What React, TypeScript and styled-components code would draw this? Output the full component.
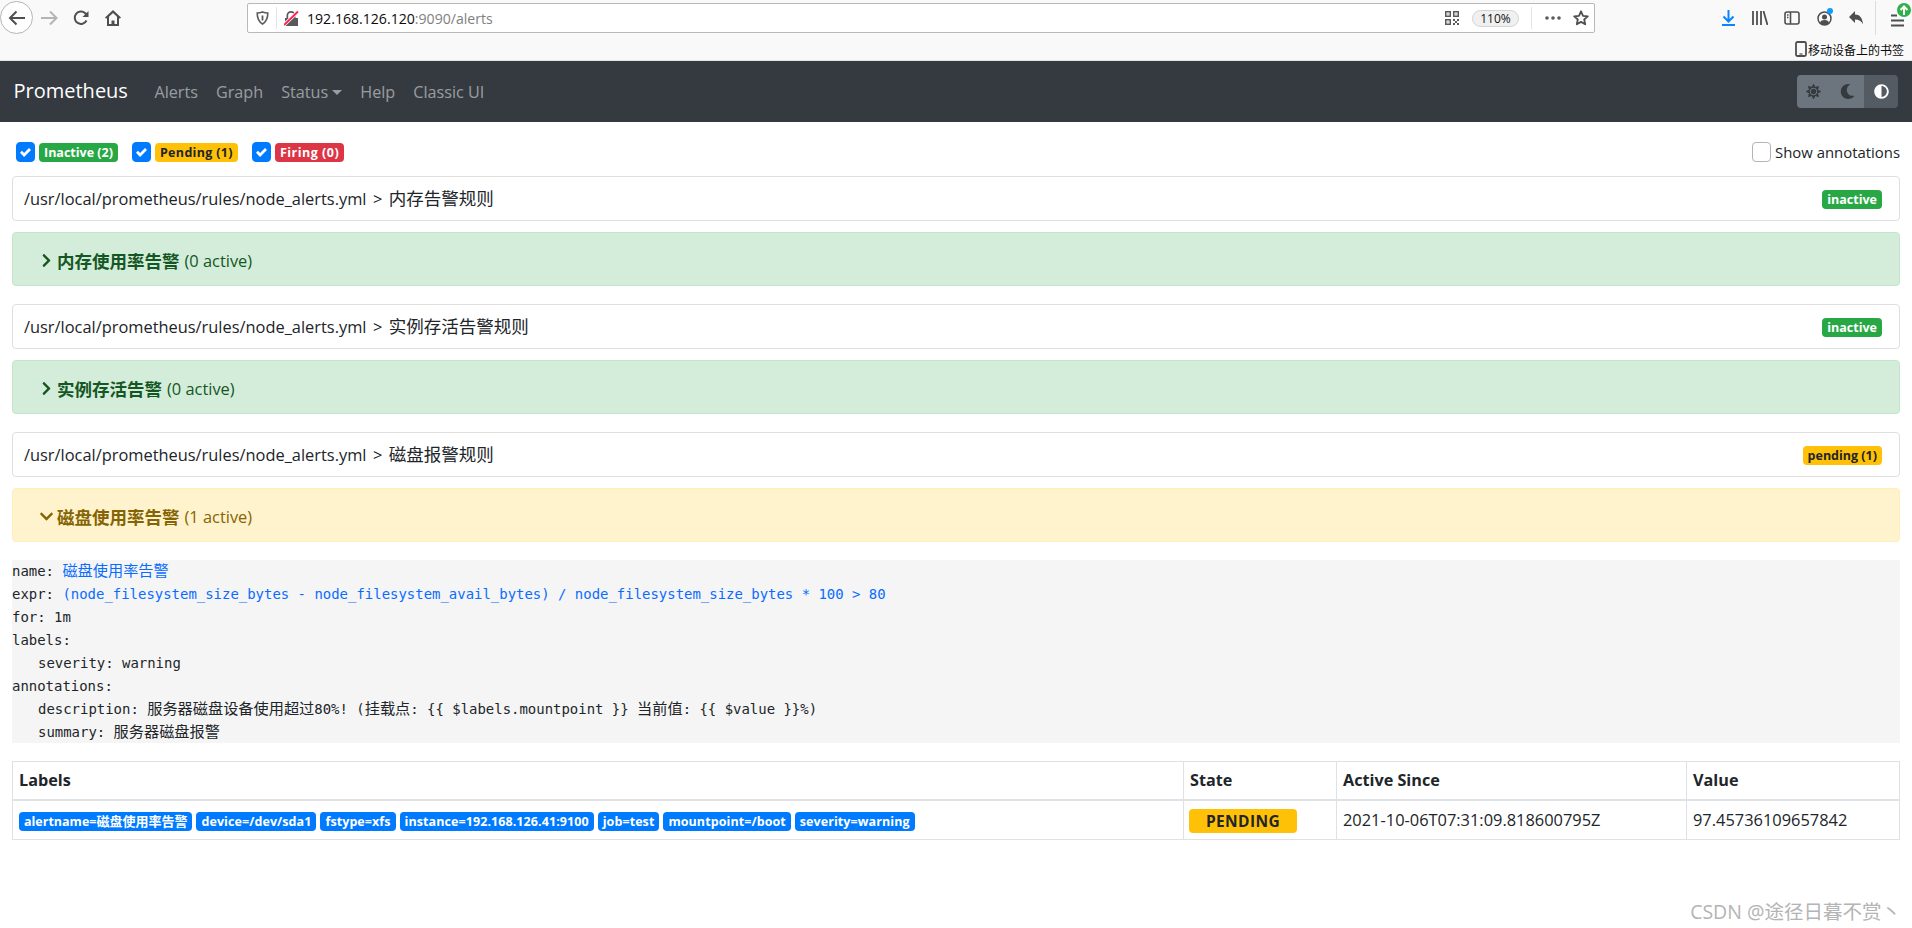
import React from "react";
import styled, { createGlobalStyle } from "styled-components";
import { FaSun, FaMoon, FaAdjust, FaChevronRight, FaChevronDown } from "react-icons/fa";

const SANS = `"Open Sans", "Noto Sans CJK SC", sans-serif`;
const MONO = `"DejaVu Sans Mono", "Noto Sans CJK SC", monospace`;

const Global = createGlobalStyle`
  html, body { margin: 0; padding: 0; background: #fff; }
  body { font-family: ${SANS}; color: #212529; font-size: 16px; overflow: hidden; }
  * { box-sizing: border-box; }
`;

const Page = styled.div`
  position: relative;
  width: 1912px;
  height: 928px;
  overflow: hidden;
`;

const Chrome = styled.header`
  height: 61px;
  background: #f9f9fa;
  border-bottom: 1px solid #e2e2e2;
`;
const Toolbar = styled.div`
  display: flex;
  align-items: flex-start;
  height: 38px;
  color: #4f4f52;
`;
const BackButton = styled.div`
  width: 33px;
  height: 33px;
  margin-top: 1px;
  border: 1px solid #b5b5b5;
  border-radius: 50%;
  background: #fff;
  display: flex;
  align-items: center;
  justify-content: center;
`;
const Slot = styled.div<{ $w?: number; $faded?: boolean; $blue?: boolean }>`
  position: relative;
  width: ${(p) => p.$w ?? 32}px;
  height: 36px;
  display: flex;
  align-items: center;
  justify-content: center;
  color: ${(p) => (p.$faded ? "#b4b4b6" : p.$blue ? "#0a84ff" : "#4f4f52")};
`;
const UrlBar = styled.div`
  width: 1348px;
  height: 30px;
  margin: 3px 0 0 118px;
  background: #fff;
  border: 1px solid #b9b9b9;
  border-radius: 2px;
  display: flex;
  align-items: center;
  padding: 0 5px 0 8px;
`;
const UrlDivider = styled.span<{ $m: string }>`
  width: 1px;
  height: 22px;
  background: #e4e4e4;
  margin: ${(p) => p.$m};
`;
const UrlText = styled.div`
  margin-left: 8px;
  flex: 1;
  font-size: 14.1px;
  color: #808080;
  white-space: nowrap;
`;
const UrlHost = styled.span`
  color: #0c0c0d;
`;
const ZoomPill = styled.div`
  width: 47px;
  height: 17px;
  margin-left: 13px;
  border: 1px solid #d4d4d4;
  border-radius: 9px;
  background: #f0f0f1;
  font-size: 12px;
  line-height: 15px;
  text-align: center;
  color: #111;
`;
const UrlIcon = styled.div<{ $m?: string }>`
  display: flex;
  margin: ${(p) => p.$m ?? "0"};
  color: #5b5b5e;
`;
const RightTools = styled.div`
  display: flex;
  margin-left: 117px;
`;
const ToolSep = styled.span`
  width: 1px;
  height: 34px;
  margin: 1px 0 0 3px;
  background: #dcdcdc;
`;
const UpdateBadge = styled.span`
  position: absolute;
  top: 3px;
  right: 1px;
  width: 14px;
  height: 14px;
  border-radius: 50%;
  background: #30b04a;
  display: flex;
  align-items: center;
  justify-content: center;
`;
const BlueDot = styled.span`
  position: absolute;
  top: 8px;
  right: 7px;
  width: 6px;
  height: 6px;
  border-radius: 50%;
  background: #0a9dff;
`;
const BookmarkBar = styled.div`
  display: flex;
  justify-content: flex-end;
  align-items: center;
  height: 22px;
  padding-right: 8px;
  gap: 1px;
  font-size: 12px;
  color: #0c0c0d;
  font-family: "Noto Sans CJK SC", sans-serif;
`;

const Navbar = styled.nav`
  height: 61px;
  background: #343a40;
  display: flex;
  align-items: center;
  padding: 0 14px 0 13.5px;
`;
const Brand = styled.div`
  font-size: 20px;
  color: #fff;
  margin-right: 26.5px;
  margin-top: -2px;
`;
const NavLinks = styled.div`
  display: flex;
  gap: 18px;
  flex: 1;
  margin-top: 1px;
`;
const NavLink = styled.span`
  font-size: 16.2px;
  color: rgba(255, 255, 255, 0.5);
  display: inline-flex;
  align-items: center;
`;
const Caret = styled.i`
  display: inline-block;
  margin-left: 4px;
  border-top: 5px solid;
  border-left: 5px solid transparent;
  border-right: 5px solid transparent;
`;
const ThemeGroup = styled.div`
  display: flex;
  border-radius: 4px;
  overflow: hidden;
`;
const ThemeBtn = styled.div<{ $active?: boolean }>`
  width: 33.7px;
  height: 33px;
  display: flex;
  align-items: center;
  justify-content: center;
  font-size: 15px;
  background: ${(p) => (p.$active ? "#545b62" : "#6c757d")};
  color: ${(p) => (p.$active ? "#fff" : "#343a40")};
`;

const Main = styled.main`
  padding: 0 12px;
`;
const FilterRow = styled.div`
  height: 54px;
  display: flex;
  align-items: center;
  justify-content: space-between;
  padding: 6px 0 0 4px;
`;
const Filters = styled.div`
  display: flex;
  gap: 14px;
`;
const Filter = styled.label`
  display: flex;
  align-items: center;
  gap: 4px;
`;
const CheckBox = styled.span<{ $on?: boolean }>`
  width: 19px;
  height: 20px;
  border-radius: 4px;
  display: flex;
  align-items: center;
  justify-content: center;
  background: ${(p) => (p.$on ? "#007bff" : "#fff")};
  border: 1px solid ${(p) => (p.$on ? "#007bff" : "#adb5bd")};
`;
const BADGE = { green: "#28a745", yellow: "#ffc107", red: "#dc3545", blue: "#007bff" };
type BadgeColor = keyof typeof BADGE;
const Badge = styled.span<{ $c: BadgeColor; $track?: number }>`
  display: inline-block;
  height: 19px;
  line-height: 19px;
  padding: 0 5px;
  border-radius: 4px;
  font-size: 12.5px;
  font-weight: 700;
  white-space: nowrap;
  letter-spacing: ${(p) => p.$track ?? 0}px;
  background: ${(p) => BADGE[p.$c]};
  color: ${(p) => (p.$c === "yellow" ? "#212529" : "#fff")};
`;
const CardBadge = styled(Badge)`
  margin-top: 3px;
  word-spacing: 0;
`;
const Cjk = styled.span<{ $s: number }>`
  font-size: ${(p) => p.$s}px;
`;
const ShowAnno = styled.label`
  display: flex;
  align-items: center;
  gap: 4px;
  font-size: 14.9px;
`;
const Card = styled.section`
  height: 45px;
  margin-bottom: 11px;
  border: 1px solid #dfdfdf;
  border-radius: 4px;
  display: flex;
  align-items: center;
  justify-content: space-between;
  padding: 0 17px 2px 11px;
  font-size: 16.4px;
  word-spacing: 2.2px;
  white-space: nowrap;
`;
const Alert = styled.section<{ $tone: "ok" | "warn" }>`
  height: 54px;
  margin-bottom: 18px;
  border-radius: 4px;
  border: 1px solid ${(p) => (p.$tone === "ok" ? "#c3e6cb" : "#ffeeba")};
  background: ${(p) => (p.$tone === "ok" ? "#d4edda" : "#fff3cd")};
  color: ${(p) => (p.$tone === "ok" ? "#155724" : "#856404")};
  display: flex;
  align-items: center;
  padding: 2px 0 0 26px;
  font-size: 16.4px;
`;
const AlertIcon = styled.span`
  display: flex;
  justify-content: center;
  width: 15px;
  margin-right: 3px;
  font-size: 15px;
`;
const AlertName = styled.strong`
  font-weight: 700;
  margin-right: 5px;
  font-size: 17.5px;
`;
const Pre = styled.pre`
  margin: 0 0 18px;
  height: 183px;
  background: #f5f5f5;
  font-family: ${MONO};
  font-size: 13.96px;
  line-height: 23px;
  color: #212529;
  overflow: hidden;
`;
const Value = styled.span`
  color: #0a6cff;
`;
const Indent = styled.span`
  padding-left: 26px;
`;
const Table = styled.table`
  width: 1887px;
  table-layout: fixed;
  border-collapse: collapse;
  font-size: 16.4px;
  border: 1px solid #dee2e6;
`;
const Th = styled.th<{ $w: number }>`
  width: ${(p) => p.$w}px;
  height: 38px;
  padding: 0 6px;
  text-align: left;
  font-weight: 700;
  font-size: 16.2px;
  border: 1px solid #dee2e6;
  border-bottom: 2px solid #dee2e6;
`;
const Td = styled.td`
  height: 40px;
  padding: 0 6px;
  border: 1px solid #dee2e6;
  white-space: nowrap;
`;
const LabelList = styled.div`
  display: flex;
  gap: 4px;
  margin-top: 3px;
`;
const StateBadge = styled.span`
  display: block;
  width: 108px;
  height: 24px;
  line-height: 24px;
  margin: 2px 0 0 -1px;
  text-align: center;
  border-radius: 4px;
  background: #ffc107;
  font-size: 15.5px;
  font-weight: 700;
  letter-spacing: 0.4px;
  color: #212529;
`;
const Watermark = styled.div`
  position: absolute;
  right: 11px;
  top: 896px;
  font-size: 19.5px;
  color: #b4b4b4;
  white-space: nowrap;
`;

const Check = () => (
  <svg width="11" height="11" viewBox="0 0 8 8">
    <path fill="#fff" d="M6.564.75l-3.59 3.612-1.538-1.55L0 4.26 2.974 7.25 8 2.193z" />
  </svg>
);

const rules = [
  { group: "内存告警规则", name: "内存使用率告警", badge: "inactive", active: 0 },
  { group: "实例存活告警规则", name: "实例存活告警", badge: "inactive", active: 0 },
  { group: "磁盘报警规则", name: "磁盘使用率告警", badge: "pending (1)", active: 1 },
];
const labels = [
  "device=/dev/sda1",
  "fstype=xfs",
  "instance=192.168.126.41:9100",
  "job=test",
  "mountpoint=/boot",
  "severity=warning",
];

export default function App() {
  return (
    <Page>
      <Global />
      <Chrome>
        <Toolbar>
          <BackButton>
            <svg width="18" height="16" viewBox="0 0 18 16" fill="none" stroke="#4f4f52" strokeWidth="2">
              <path d="M17 8H2M8.5 1.5 2 8l6.500 6.500" />
            </svg>
          </BackButton>
          <Slot $faded>
            <svg width="17" height="16" viewBox="0 0 17 16" fill="none" stroke="currentColor" strokeWidth="2">
              <path d="M0 8h15M9 1.500 15.500 8 9 14.500" />
            </svg>
          </Slot>
          <Slot>
            <svg width="16" height="16" viewBox="0 0 16 16" fill="none">
              <path d="M13.500 10.500A6.200 6.200 0 1 1 12.200 3.200L14 5" stroke="currentColor" strokeWidth="2" />
              <path d="M15.500 1v6h-6z" fill="currentColor" />
            </svg>
          </Slot>
          <Slot>
            <svg width="16" height="16" viewBox="0 0 16 16" fill="currentColor">
              <path fillRule="evenodd" d="M8 0 0 7.500 1.200 8.800 2 8v8h12V8l.8.8L16 7.500zM4 6.800l4-3.700 4 3.700V14h-2.500v-3.500h-3V14H4z" />
            </svg>
          </Slot>
          <UrlBar>
            <UrlIcon>
              <svg width="13" height="14" viewBox="0 0 13 14" fill="none">
                <path d="M1.200 2c2 0 3.600-.4 5.300-1.100C8.200 1.600 9.800 2 11.800 2c0 5.200-1.700 8.900-5.300 11C2.900 10.900 1.200 7.200 1.200 2z" stroke="currentColor" strokeWidth="1.600" />
                <path d="M6.500 4.500v5" stroke="currentColor" strokeWidth="1.800" />
              </svg>
            </UrlIcon>
            <UrlDivider $m="0 7px 0 7px" />
            <UrlIcon>
              <svg width="15" height="16" viewBox="0 0 15 16">
                <path d="M1 8h1.500V5.500a4.500 4.500 0 0 1 9 0V8H14v8H1zm3.200 0h5.600V5.500a2.800 2.800 0 0 0-5.600 0z" fill="#59595c" fillRule="evenodd" />
                <path d="M0 15 14 1.500" stroke="#f9f9fa" strokeWidth="3.500" />
                <path d="M0 15 14 1.500" stroke="#ff1f4f" strokeWidth="1.800" />
              </svg>
            </UrlIcon>
            <UrlText>
              <UrlHost>192.168.126.120</UrlHost>:9090/alerts
            </UrlText>
            <UrlIcon>
              <svg width="14" height="14" viewBox="0 0 14 14" fill="currentColor">
                <path fillRule="evenodd" d="M0 0h6v6H0zm1.500 1.500v3h3v-3zM8 0h6v6H8zm1.500 1.500v3h3v-3zM0 8h6v6H0zm1.500 1.500v3h3v-3z" />
                <path d="M2.500 2.500h1v1h-1zM10.500 2.500h1v1h-1zM2.500 10.500h1v1h-1zM8 8h2v2H8zM12 8h2v2h-2zM10 10h2v2h-2zM8 12h2v2H8zM12 12h2v2h-2z" />
              </svg>
            </UrlIcon>
            <ZoomPill>110%</ZoomPill>
            <UrlDivider $m="0 13px 0 12px" />
            <UrlIcon>
              <svg width="16" height="4" viewBox="0 0 16 4" fill="currentColor">
                <circle cx="2" cy="2" r="1.800" />
                <circle cx="8" cy="2" r="1.800" />
                <circle cx="14" cy="2" r="1.800" />
              </svg>
            </UrlIcon>
            <UrlIcon $m="0 0 0 12px">
              <svg width="16" height="16" viewBox="0 0 16 16" fill="none" stroke="#4f4f52" strokeWidth="1.800" strokeLinejoin="round">
                <path d="M8 1.300 10 5.800l4.800.5-3.600 3.200 1 4.800L8 11.900l-4.200 2.400 1-4.800L1.200 6.300 6 5.800z" />
              </svg>
            </UrlIcon>
          </UrlBar>
          <RightTools>
            <Slot $blue>
              <svg width="13" height="16" viewBox="0 0 13 16" fill="none" stroke="currentColor" strokeWidth="2">
                <path d="M6.500 0v11M1.500 6.500l5 5 5-5M0 15h13" />
              </svg>
            </Slot>
            <Slot>
              <svg width="16" height="14" viewBox="0 0 16 14" fill="none" stroke="currentColor" strokeWidth="1.800">
                <path d="M1 0v14M5 0v14M9 0v14M11.500 0l4 14" />
              </svg>
            </Slot>
            <Slot>
              <svg width="16" height="14" viewBox="0 0 16 14" fill="none" stroke="currentColor" strokeWidth="1.600">
                <rect x="1" y="1" width="14" height="12" rx="2" />
                <path d="M6.500 1v12M3 4h1.500M3 6.500h1.500" />
              </svg>
            </Slot>
            <Slot>
              <svg width="15" height="15" viewBox="0 0 15 15" fill="none">
                <circle cx="7.500" cy="7.500" r="6.500" stroke="currentColor" strokeWidth="1.500" />
                <circle cx="7.500" cy="6" r="2.500" fill="currentColor" />
                <path d="M3 12c.6-2.400 2.300-3 4.500-3s3.900.6 4.500 3a6 6 0 0 1-9 0z" fill="currentColor" />
              </svg>
              <BlueDot />
            </Slot>
            <Slot>
              <svg width="14" height="14" viewBox="0 0 14 14" fill="currentColor">
                <path d="M6 0v3.500c4.500 0 7.500 3 8 10-1.500-3.500-4-5-8-5V12L0 6z" />
              </svg>
            </Slot>
            <ToolSep />
            <Slot $w={36}>
              <svg width="13" height="13" viewBox="0 0 13 13" fill="none" stroke="currentColor" strokeWidth="1.800" style={{ marginLeft: 6, marginTop: 4 }}>
                <path d="M0 1.500h6M0 6.500h13M0 11.500h13" />
              </svg>
              <UpdateBadge>
                <svg width="10" height="10" viewBox="0 0 10 10" fill="none" stroke="#fff" strokeWidth="2">
                  <path d="M5 10V1.500M1.500 5 5 1.500 8.500 5" />
                </svg>
              </UpdateBadge>
            </Slot>
          </RightTools>
        </Toolbar>
        <BookmarkBar>
          <svg width="12" height="16" viewBox="0 0 12 16" fill="none">
            <rect x="1" y="1" width="10" height="14" rx="1.500" stroke="#4f4f52" strokeWidth="1.800" />
            <path d="M4.500 13h3" stroke="#4f4f52" strokeWidth="1.200" />
          </svg>
          移动设备上的书签
        </BookmarkBar>
      </Chrome>

      <Navbar>
        <Brand>Prometheus</Brand>
        <NavLinks>
          <NavLink>Alerts</NavLink>
          <NavLink>Graph</NavLink>
          <NavLink>
            Status
            <Caret />
          </NavLink>
          <NavLink>Help</NavLink>
          <NavLink>Classic UI</NavLink>
        </NavLinks>
        <ThemeGroup>
          <ThemeBtn><FaSun /></ThemeBtn>
          <ThemeBtn><FaMoon /></ThemeBtn>
          <ThemeBtn $active><FaAdjust /></ThemeBtn>
        </ThemeGroup>
      </Navbar>

      <Main>
        <FilterRow>
          <Filters>
            <Filter>
              <CheckBox $on><Check /></CheckBox>
              <Badge $c="green">Inactive (2)</Badge>
            </Filter>
            <Filter>
              <CheckBox $on><Check /></CheckBox>
              <Badge $c="yellow" $track={0.33}>Pending (1)</Badge>
            </Filter>
            <Filter>
              <CheckBox $on><Check /></CheckBox>
              <Badge $c="red" $track={0.5}>Firing (0)</Badge>
            </Filter>
          </Filters>
          <ShowAnno>
            <CheckBox />
            Show annotations
          </ShowAnno>
        </FilterRow>

        {rules.map((r) => (
          <React.Fragment key={r.group}>
            <Card>
              <span>/usr/local/prometheus/rules/node_alerts.yml &gt; <Cjk $s={17.5}>{r.group}</Cjk></span>
              <CardBadge $c={r.active ? "yellow" : "green"}>{r.badge}</CardBadge>
            </Card>
            <Alert $tone={r.active ? "warn" : "ok"}>
              <AlertIcon>{r.active ? <FaChevronDown /> : <FaChevronRight />}</AlertIcon>
              <AlertName>{r.name}</AlertName>
              ({r.active} active)
            </Alert>
          </React.Fragment>
        ))}

        <Pre>
          name: <Value><Cjk $s={15.2}>磁盘使用率告警</Cjk></Value>
          {"\n"}expr: <Value>(node_filesystem_size_bytes - node_filesystem_avail_bytes) / node_filesystem_size_bytes * 100 &gt; 80</Value>
          {"\n"}for: 1m
          {"\n"}labels:
          {"\n"}<Indent>severity: warning</Indent>
          {"\n"}annotations:
          {"\n"}<Indent>description: <Cjk $s={15.2}>服务器磁盘设备使用超过</Cjk>80%! (<Cjk $s={15.2}>挂载点</Cjk>: {"{{ $labels.mountpoint }}"} <Cjk $s={15.2}>当前值</Cjk>: {"{{ $value }}"}%)</Indent>
          {"\n"}<Indent>summary: <Cjk $s={15.2}>服务器磁盘报警</Cjk></Indent>
        </Pre>

        <Table>
          <thead>
            <tr>
              <Th $w={1171}>Labels</Th>
              <Th $w={153}>State</Th>
              <Th $w={350}>Active Since</Th>
              <Th $w={213}>Value</Th>
            </tr>
          </thead>
          <tbody>
            <tr>
              <Td>
                <LabelList>
                  <Badge $c="blue">alertname=<Cjk $s={13}>磁盘使用率告警</Cjk></Badge>
                  {labels.map((l) => (
                    <Badge $c="blue" $track={0.08} key={l}>{l}</Badge>
                  ))}
                </LabelList>
              </Td>
              <Td><StateBadge>PENDING</StateBadge></Td>
              <Td>2021-10-06T07:31:09.818600795Z</Td>
              <Td>97.45736109657842</Td>
            </tr>
          </tbody>
        </Table>
      </Main>
      <Watermark>CSDN @途径日暮不赏丶</Watermark>
    </Page>
  );
}
